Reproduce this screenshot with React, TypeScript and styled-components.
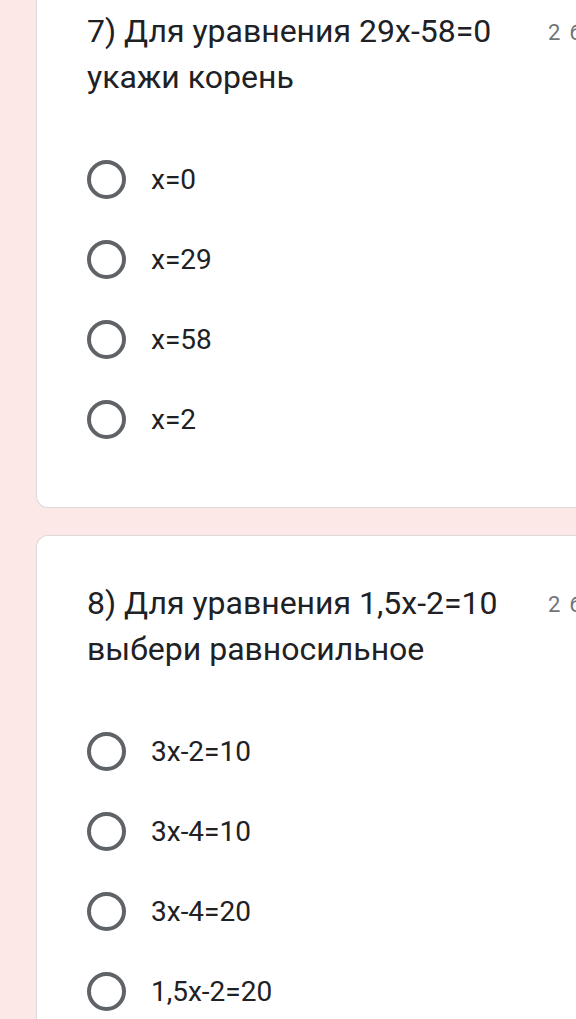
import React from "react";
import styled, { createGlobalStyle } from "styled-components";

const GlobalStyle = createGlobalStyle`
  html, body {
    margin: 0;
    padding: 0;
    background: #fce8e6;
    font-family: Roboto, "Noto Sans", Arial, sans-serif;
    overflow: hidden;
  }
`;

const Page = styled.div`
  display: flex;
  flex-direction: column;
  gap: 27px;
  padding-left: 36px;
  margin-top: -37px;
  overflow: hidden;
`;

const Card = styled.div`
  background: #ffffff;
  border: 1.5px solid #ddd9d9;
  border-right: none;
  border-radius: 12px 0 0 12px;
  margin-right: -24px;
  padding: 44px 0 48px 50px;
`;

const Header = styled.div`
  display: flex;
  align-items: flex-start;
`;

const Title = styled.div`
  width: 440px;
  flex-shrink: 0;
  font-size: 32px;
  line-height: 46px;
  color: #202124;
`;

const Points = styled.div`
  margin-left: 21px;
  font-size: 22px;
  line-height: 46px;
  padding-top: 2px;
  color: #70757a;
  white-space: nowrap;
  letter-spacing: 2px;
`;

const Options = styled.div`
  display: flex;
  flex-direction: column;
  margin-top: 39px;
`;

const Option = styled.label`
  display: flex;
  align-items: center;
  height: 80px;
`;

const Radio = styled.span`
  box-sizing: border-box;
  width: 39px;
  height: 39px;
  border-radius: 50%;
  border: 4px solid #5f6368;
  flex-shrink: 0;
`;

const OptionText = styled.span`
  margin-left: 25px;
  font-size: 28px;
  color: #202124;
`;

type Question = { title: string; options: string[] };

const questions: Question[] = [
  {
    title: "7) Для уравнения 29x-58=0 укажи корень",
    options: ["x=0", "x=29", "x=58", "x=2"],
  },
  {
    title: "8) Для уравнения 1,5x-2=10 выбери равносильное",
    options: ["3x-2=10", "3x-4=10", "3x-4=20", "1,5x-2=20"],
  },
];

export default function App() {
  return (
    <>
      <GlobalStyle />
      <Page>
        {questions.map((q) => (
          <Card key={q.title}>
            <Header>
              <Title>{q.title}</Title>
              <Points>2 балла</Points>
            </Header>
            <Options>
              {q.options.map((o) => (
                <Option key={o}>
                  <Radio />
                  <OptionText>{o}</OptionText>
                </Option>
              ))}
            </Options>
          </Card>
        ))}
      </Page>
    </>
  );
}
